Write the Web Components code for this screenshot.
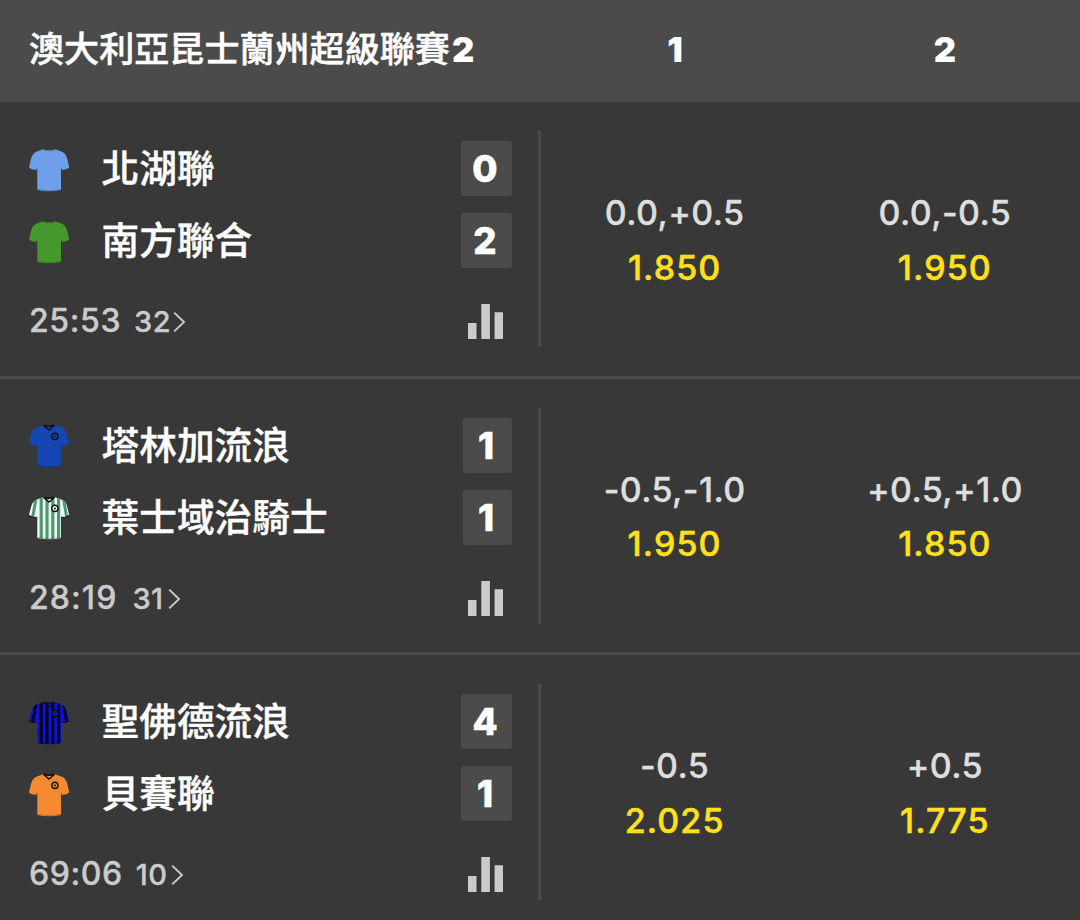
<!DOCTYPE html>
<html lang="zh-Hant">
<head>
<meta charset="UTF-8">
<title>澳大利亞昆士蘭州超級聯賽2</title>
<style>
    html, body { margin: 0; height: 920px; overflow: hidden; background: #383838; }
    body { font-family: Inter, "Noto Sans CJK TC", sans-serif; color: #fff; }
</style>
</head>
<body>
<odds-board>
    <league-header slot="header" name="澳大利亞昆士蘭州超級聯賽" division="2"></league-header>

    <match-row time="25:53" markets="32">
        <team-line slot="teams" name="北湖聯" score="0" shirt="plain" color="#6f9fe8"></team-line>
        <team-line slot="teams" name="南方聯合" score="2" shirt="plain" color="#45992c"></team-line>
        <odds-cell slot="odds" line="0.0,+0.5" price="1.850"></odds-cell>
        <odds-cell slot="odds" line="0.0,-0.5" price="1.950"></odds-cell>
    </match-row>

    <match-row time="28:19" markets="31" narrow>
        <team-line slot="teams" name="塔林加流浪" score="1" shirt="badge" color="#1546b4"></team-line>
        <team-line slot="teams" name="葉士域治騎士" score="1" shirt="badge" color="#f4f8f4" stripe="#4b9a70"></team-line>
        <odds-cell slot="odds" line="-0.5,-1.0" price="1.950"></odds-cell>
        <odds-cell slot="odds" line="+0.5,+1.0" price="1.850"></odds-cell>
    </match-row>

    <match-row time="69:06" markets="10">
        <team-line slot="teams" name="聖佛德流浪" score="4" shirt="badge" color="#1111dc" stripe="#05051c"></team-line>
        <team-line slot="teams" name="貝賽聯" score="1" shirt="badge" color="#f58a32"></team-line>
        <odds-cell slot="odds" line="-0.5" price="2.025"></odds-cell>
        <odds-cell slot="odds" line="+0.5" price="1.775"></odds-cell>
    </match-row>
</odds-board>

<script>
class OddsBoard extends HTMLElement {
    connectedCallback() {
        this.attachShadow({ mode: 'open' });
        this.shadowRoot.innerHTML = `
            <style>
                :host{display:flex;flex-direction:column;width:1080px}
            </style>
            <slot name="header"></slot>
            <slot></slot>
        `;
    }
}

class LeagueHeader extends HTMLElement {
    connectedCallback() {
        const name = this.getAttribute('name') || '';
        const division = this.getAttribute('division') || '';

        this.attachShadow({ mode: 'open' });
        this.shadowRoot.innerHTML = `
            <style>
                :host{display:grid;grid-template-columns:540px 1fr 1fr;align-items:center;height:102px;padding-bottom:3px;box-sizing:border-box;background:#4b4b4b}
                .name{padding-left:29px;font-size:35.1px;font-weight:500;line-height:50px;white-space:nowrap;-webkit-text-stroke:.5px currentColor}
                .num{font-size:34.5px;font-weight:900;line-height:50px;-webkit-text-stroke:0}
                .name .num{margin-left:2px}
                .col{text-align:center}
            </style>
            <div class="name">${name}<span class="num">${division}</span></div>
            <div class="num col">1</div>
            <div class="num col">2</div>
        `;
    }
}

class MatchRow extends HTMLElement {
    connectedCallback() {
        const time = this.getAttribute('time') || '';
        const markets = this.getAttribute('markets') || '';

        this.attachShadow({ mode: 'open' });
        this.shadowRoot.innerHTML = `
            <style>
                :host{display:block;height:276.5px;box-sizing:border-box;border-bottom:3px solid #4b4b4b;--score-width:51px;--time-space:.6px;--count-gap:13px}
                :host([narrow]){--score-width:49px;--time-space:1.1px;--count-gap:15px}
                :host(:last-of-type){border-bottom-color:transparent}
                .row{display:grid;grid-template-columns:537.5px 3px 1fr;padding-top:29px}
                .match{display:flex;flex-direction:column;gap:17px;padding:10px 26px 0 29px}
                .divider{height:216px;background:#4b4b4b}
                .odds{display:grid;grid-template-columns:1fr 1fr;align-content:start;padding-top:55px;margin-left:-1px}
                .foot{display:flex;align-items:flex-start;height:36px;margin-top:18px;color:#cbcbcb;-webkit-text-stroke:.35px currentColor}
                .time{font-size:32px;font-weight:500;line-height:36px;letter-spacing:var(--time-space)}
                .count{font-size:29px;font-weight:500;line-height:37px;margin-left:var(--count-gap);letter-spacing:.4px;min-width:33px}
                .more{width:13px;height:22px;margin:8px 0 0 2px}
                .stats{width:35px;height:35px;margin:1px 8.6px 0 auto}
            </style>
            <div class="row">
                <div class="match">
                    <slot name="teams"></slot>
                    <div class="foot">
                        <span class="time">${time}</span>
                        <span class="count">${markets}</span>
                        <svg class="more" viewBox="0 0 13 22"><path d="M1.2 1.6 11 11 1.2 20.4" fill="none" stroke="currentColor" stroke-width="1.9"/></svg>
                        <svg class="stats" viewBox="0 0 35 35"><path d="M0 19h8.5v16H0zM13.3 0h8.6v35h-8.6zM26.6 8.3H35V35h-8.4z" fill="currentColor"/></svg>
                    </div>
                </div>
                <div class="divider"></div>
                <div class="odds"><slot name="odds"></slot></div>
            </div>
        `;
    }
}

class TeamLine extends HTMLElement {
    connectedCallback() {
        const name = this.getAttribute('name') || '';
        const score = this.getAttribute('score') || '0';

        this.attachShadow({ mode: 'open' });
        this.shadowRoot.innerHTML = `
            <style>
                :host{display:flex;align-items:center;height:55px}
                svg{width:40px;height:44px;flex:none;margin-top:2px}
                .name{margin-left:32.5px;font-size:37.7px;font-weight:500;line-height:55px;white-space:nowrap;-webkit-text-stroke:.4px currentColor}
                .score{margin-left:auto;width:var(--score-width);height:55px;border-radius:3px;background:#4b4b4b;font-size:36.5px;font-weight:800;line-height:56px;text-align:center;text-indent:-2px;-webkit-text-stroke:.6px currentColor}
            </style>
            ${this.shirt()}
            <div class="name">${name}</div>
            <div class="score">${score}</div>
        `;
    }

    shirt() {
        const color = this.getAttribute('color') || '#fff';
        const stripe = this.getAttribute('stripe');
        const badge = this.getAttribute('shirt') === 'badge';
        const body = 'M14 1.2Q20 3 26 1.2L33 3.8Q36.5 5.3 38 10L40.3 19.5Q37 22.2 33 21.7L32 19.5V42Q20 44.5 8.3 42V19.5L7.3 21.7Q3 22.2-.1 19.5L2.3 10Q4 5.3 7.3 3.8Z';

        // stripes follow the torso, the two outer ones lean with the sleeves
        const stripes = stripe ? `
            <g clip-path="url(#body)" stroke="${stripe}" stroke-width="3.2">
                <path d="M12.2 0V44M18 0V44M23.8 0V44M29.6 0V44"/>
                <path d="M7 3 3.3 23M34.5 3 38 23" stroke-width="3"/>
            </g>` : '';
        const trim = badge ? `
            <path d="M14.5 1.5 20 6 25.5 1.5M14.5 1.3Q20 3 25.5 1.3" fill="none" stroke="#10141a" stroke-width="1.5"/>
            <circle cx="25.9" cy="12.4" r="3.1" fill="${color}" stroke="#10141a" stroke-width="1.4"/>
            <circle cx="25.9" cy="12.4" r="1" fill="#10141a"/>` : '<path d="M14.2 1.8Q20 4.2 25.8 1.8" fill="none" stroke="#000" stroke-opacity=".25" stroke-width="1"/>';
        const cuffs = stripe ? '<path d="M0 19.4Q3.5 22 7.3 21.4M32.8 21.4Q37 22 40 19.4" fill="none" stroke="#10141a" stroke-width="1.2"/>' : '';

        return `
            <svg viewBox="0 0 40 44">
                <clipPath id="body"><path d="${body}"/></clipPath>
                <path d="${body}" fill="${color}"/>
                ${stripes}${cuffs}${trim}
                <path d="M8.3 41.5Q20 44 32 41.5" fill="none" stroke="#000" stroke-opacity=".2" stroke-width="1"/>
            </svg>`;
    }
}

class OddsCell extends HTMLElement {
    connectedCallback() {
        const line = this.getAttribute('line') || '';
        const price = this.getAttribute('price') || '';

        this.attachShadow({ mode: 'open' });
        this.shadowRoot.innerHTML = `
            <style>
                :host{display:flex;flex-direction:column;align-items:center;font-size:34px;font-weight:500;line-height:54.5px;letter-spacing:.4px;-webkit-text-stroke:.35px currentColor}
                .line{color:#dedede}
                .price{color:#ffe01b;letter-spacing:1.1px;-webkit-text-stroke:.5px currentColor}
            </style>
            <div class="line">${line}</div>
            <div class="price">${price}</div>
        `;
    }
}

customElements.define('odds-board', OddsBoard);
customElements.define('league-header', LeagueHeader);
customElements.define('match-row', MatchRow);
customElements.define('team-line', TeamLine);
customElements.define('odds-cell', OddsCell);
</script>
</body>
</html>
